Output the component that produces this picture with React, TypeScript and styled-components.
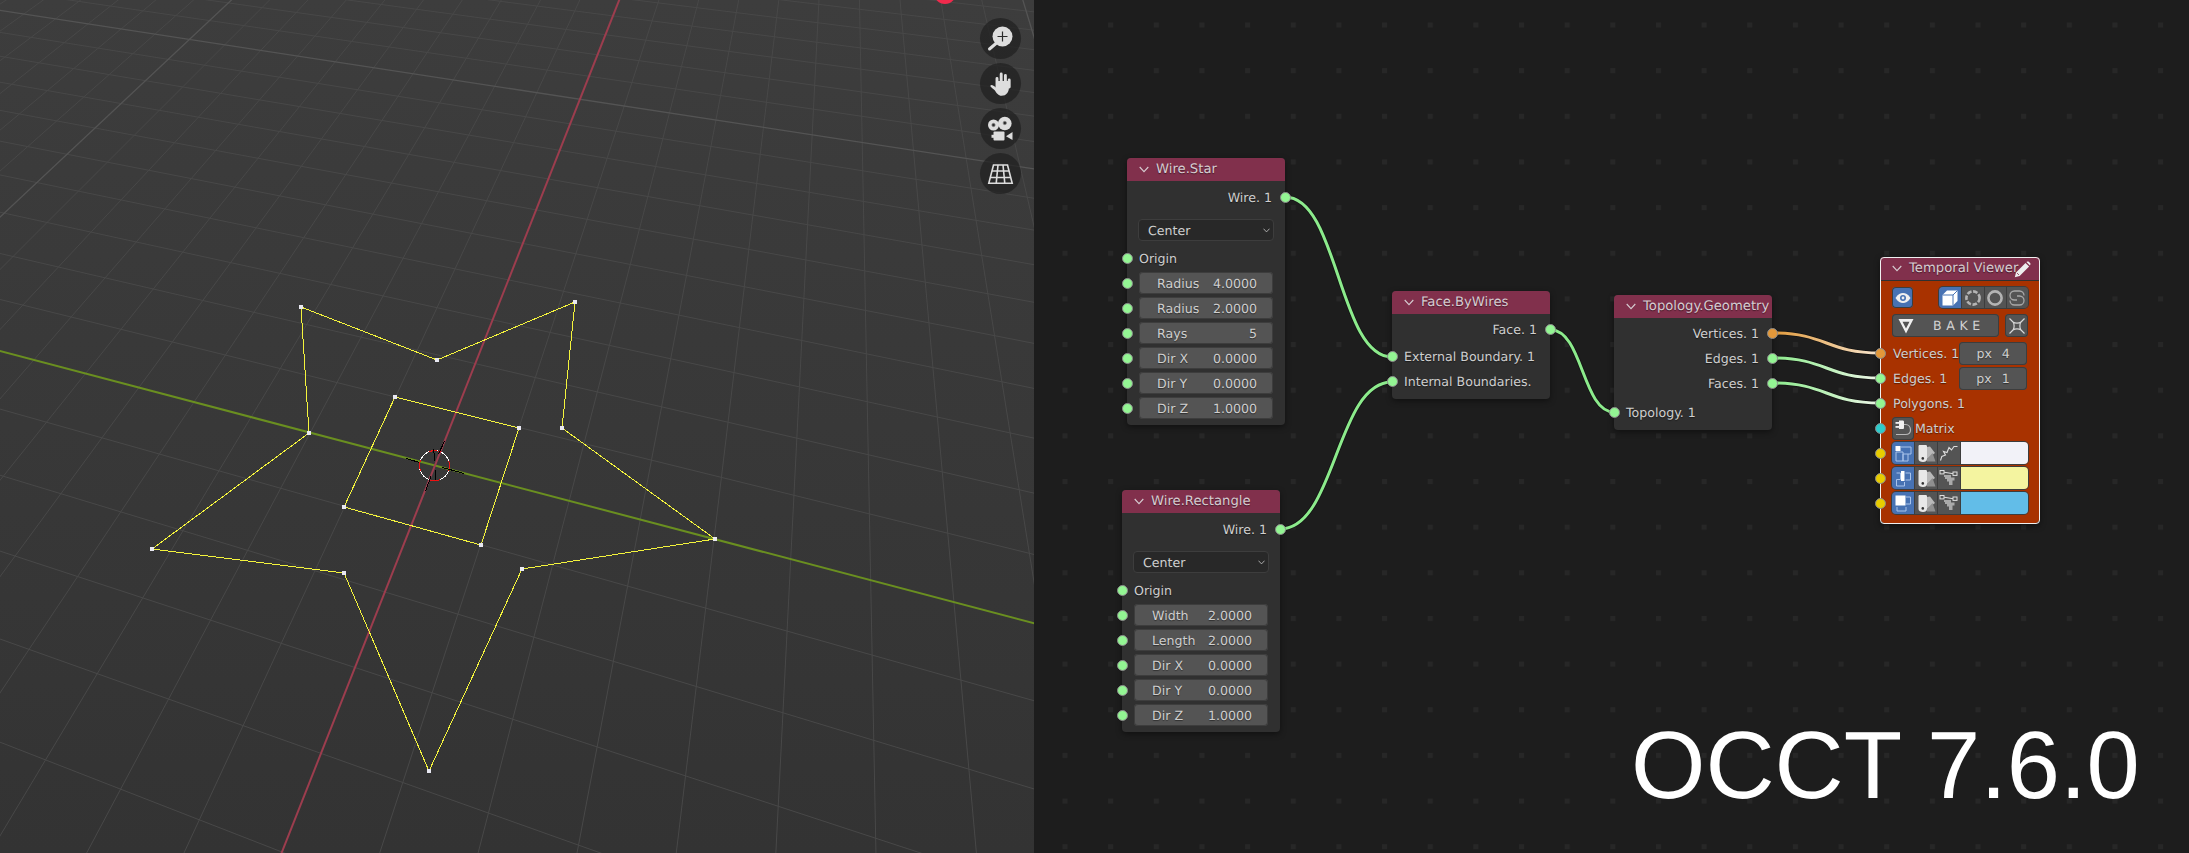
import React, {useMemo} from "react";
import styled, {createGlobalStyle} from "styled-components";

const GlobalStyle = createGlobalStyle`
    html, body {
        margin: 0;
        width: 2189px;
        height: 853px;
        overflow: hidden;
        background: #1d1d1d;
    }
`

const Page = styled.div`
    display: flex;
    width: 2189px;
    height: 853px;
    font-family: "DejaVu Sans", "Liberation Sans", sans-serif;
    font-size: 12.6px;
    color: #cfcfcf;
    text-rendering: geometricPrecision;
`

const Viewport = styled.div`
    position: relative;
    flex: none;
    width: 1034px;
    overflow: hidden;
    background: linear-gradient(#3d3d3d, #333333);
`

const Drawing = styled.svg`
    position: absolute;
    inset: 0;
    width: 100%;
    height: 100%;
`

const GizmoColumn = styled.div`
    position: absolute;
    top: 17.5px;
    right: 13.5px;
    display: flex;
    flex-direction: column;
    gap: 4px;
`

const GizmoButton = styled.div`
    width: 41px;
    height: 41px;
    border-radius: 50%;
    background: rgba(32, 32, 32, 0.72);

    svg {
        display: block;
    }
`

const Editor = styled.div`
    position: relative;
    flex: 1;
    overflow: hidden;
    background: #1d1d1d;
`

const Caption = styled.div`
    position: absolute;
    left: 597px;
    top: 711px;
    font-family: "Liberation Sans", Arial, sans-serif;
    font-size: 95.7px;
    color: #ffffff;
    white-space: nowrap;
`

const NodeBox = styled.div<{$x: number; $y: number; $selected?: boolean}>`
    position: absolute;
    left: ${p => p.$x}px;
    top: ${p => p.$y}px;
    width: ${p => (p.$selected ? 160 : 158)}px;
    box-sizing: border-box;
    border-radius: 4px;
    background: #303030;
    box-shadow: 0 2px 6px rgba(0, 0, 0, 0.45);
    outline: ${p => (p.$selected ? "1px solid #f0f0f0" : "none")};
    outline-offset: -1px;
`

const NodeHeader = styled.div`
    display: flex;
    align-items: center;
    gap: 7px;
    height: 23px;
    padding-left: 12px;
    border-radius: 4px 4px 0 0;
    background: #81304c;
    color: #d6ccd1;
    font-size: 13.2px;
    text-shadow: 0 1px 1px rgba(0, 0, 0, 0.45);
    white-space: nowrap;

    svg {
        flex: none;
    }
`

const NodeBody = styled.div`
    padding: 3.5px 0 4.5px;
`

const Row = styled.div<{$output?: boolean; $gap?: number}>`
    position: relative;
    display: flex;
    align-items: center;
    justify-content: ${p => (p.$output ? "flex-end" : "flex-start")};
    box-sizing: border-box;
    height: 25px;
    margin-top: ${p => p.$gap ?? 0}px;
    padding: 0 ${p => (p.$output ? 13 : 12)}px 0 12px;
    text-shadow: 0 1px 1px rgba(0, 0, 0, 0.45);
    white-space: nowrap;
`

const Socket = styled.span<{$side: "left" | "right"; $color?: string}>`
    position: absolute;
    ${p => p.$side}: -5.5px;
    top: 7px;
    box-sizing: border-box;
    width: 11px;
    height: 11px;
    border-radius: 50%;
    border: 1.5px solid #8a8a8a;
    background: ${p => p.$color ?? "#93f593"};
`

const ViewerBody = styled.div`
    border-radius: 0 0 4px 4px;
    background: #a83200;
    padding: 6px 0 7.5px;
    margin: 1px;

    ${Socket} {
        left: -6.5px;
    }
`

const Field = styled.div`
    flex: 1;
    display: flex;
    align-items: center;
    justify-content: space-between;
    box-sizing: border-box;
    height: 22px;
    padding: 0 16px 0 18px;
    border-radius: 4px;
    background: #545454;
    box-shadow: 0 0 0 1px #3d3d3d inset;
`

const Dropdown = styled.div`
    display: flex;
    align-items: center;
    justify-content: space-between;
    box-sizing: border-box;
    height: 22px;
    margin: 9.5px 11px 4.5px 11px;
    padding: 0 3.5px 0 9px;
    border-radius: 4px;
    background: #282828;
    border: 1px solid #3d3d3d;
`

const ToolRow = styled.div`
    display: flex;
    align-items: stretch;
    justify-content: space-between;
    height: 21px;
    margin: 0 11px 6px;
`

const BakeRow = styled.div`
    display: flex;
    gap: 6px;
    height: 23px;
    margin: 0 11px 3.5px;
`

const ToolButton = styled.div<{$active?: boolean; $width?: number}>`
    display: flex;
    align-items: center;
    justify-content: center;
    flex: none;
    box-sizing: border-box;
    width: ${p => p.$width ?? 22}px;
    border-radius: 4px;
    background: ${p => (p.$active ? "#4772b3" : "#545454")};
    box-shadow: 0 0 0 1px #3d3d3d inset;
`

const ButtonGroup = styled.div`
    display: flex;
    border-radius: 4px;
    overflow: hidden;
    box-shadow: 0 0 0 1px #3d3d3d;
`

const GroupCell = styled.div<{$active?: boolean; $width?: number}>`
    display: flex;
    align-items: center;
    justify-content: center;
    flex: none;
    box-sizing: border-box;
    width: ${p => p.$width ?? 22.25}px;
    background: ${p => (p.$active ? "#4772b3" : "#545454")};

    & + & {
        border-left: 1px solid #3d3d3d;
    }
`

const BakeButton = styled.div`
    flex: 1;
    display: flex;
    align-items: center;
    box-sizing: border-box;
    padding-left: 6px;
    border-radius: 4px;
    background: #545454;
    box-shadow: 0 0 0 1px #3d3d3d inset;
    color: #d2d2d2;
    letter-spacing: 4.6px;
`

const BakeLabel = styled.span`
    margin-left: 19px;
`

const PixelField = styled.div`
    display: flex;
    align-items: center;
    justify-content: center;
    gap: 10px;
    box-sizing: border-box;
    width: 68px;
    height: 23px;
    margin-left: auto;
    border-radius: 4px;
    background: #545454;
    box-shadow: 0 0 0 1px #3d3d3d inset;
`

const PlugButton = styled(ToolButton)`
    height: 23px;
    margin-left: -1px;
    margin-right: 1px;
`

const ColorStrip = styled.div`
    flex: 1;
    display: flex;
    height: 22px;
    margin: 0 -1px;
    border-radius: 4px;
    overflow: hidden;
    box-shadow: 0 0 0 1px #3d3d3d;
`

const Swatch = styled.div<{$color: string}>`
    flex: 1;
    background: ${p => p.$color};
    border-left: 1px solid #3d3d3d;
`

const PencilSpot = styled.span`
    position: absolute;
    left: 134px;
    top: 4px;
    line-height: 0;
`

/* ground plane -> screen, fitted on the axes and the rectangle corners */
const project = (u: number, v: number) => {
    const w = 1 - 0.0183 * u - 0.05404 * v
    return [(435 + 56.68 * u - 45.84 * v) / w, (465.5 + 8.5 * u + 31.26 * v) / w]
}

const segment = (a: number[], b: number[]) => `M${a[0].toFixed(1)} ${a[1].toFixed(1)}L${b[0].toFixed(1)} ${b[1].toFixed(1)}`

const starPoints = [[301, 307], [437, 360], [575, 302], [562, 428], [715, 539], [522, 569], [429, 771], [344, 573], [152, 549], [309, 433]]
const rectPoints = [[395, 397], [519, 428], [481, 545], [344, 507]]

const GroundGrid = () => {
    const {minor, major} = useMemo(() => {
        const minorLines: string[] = []
        const majorLines: string[] = []
        for (let i = -40; i <= 14; i++) {
            if (i === 0) continue
            const target = i % 10 === 0 ? majorLines : minorLines
            target.push(segment(project(i, -40), project(i, 12)))
        }
        for (let i = -40; i <= 12; i++) {
            if (i === 0) continue
            const target = i % 10 === 0 ? majorLines : minorLines
            target.push(segment(project(-40, i), project(14, i)))
        }
        return {minor: minorLines.join(""), major: majorLines.join("")}
    }, [])

    return (
        <g fill="none">
            <path d={minor} stroke="#484848" strokeWidth="1"/>
            <path d={major} stroke="#545454" strokeWidth="1.3"/>
            <path d={segment(project(-40, 0), project(14, 0))} stroke="#6a8f20" strokeWidth="2"/>
            <path d={segment(project(0, -40), project(0, 12))} stroke="#9c3d4e" strokeWidth="2"/>
        </g>
    )
}

const WireShape = ({points}: {points: number[][]}) => (
    <g>
        <polygon
            points={points.map(p => p.join(",")).join(" ")}
            fill="none"
            stroke="#f4f43c"
            strokeWidth="1"
            shapeRendering="crispEdges"
        />
        {points.map(([x, y]) => (
            <rect key={`${x}-${y}`} x={x - 2} y={y - 2} width="4" height="4" fill="#e8e8f2"/>
        ))}
    </g>
)

const Cursor3D = () => (
    <g fill="none" shapeRendering="crispEdges">
        <circle cx="434.5" cy="465.7" r="15" stroke="#ffffff" strokeWidth="1"/>
        <circle cx="434.5" cy="465.7" r="15" stroke="#ee1111" strokeWidth="1" strokeDasharray="11.8 11.8" strokeDashoffset="6"/>
        <path
            d="M406 458.5L419.5 462.5M442.5 467.5L464 473.5M444.5 441L438.5 454M431 476.5L425.5 491M433.5 449.5L435 461M435.5 470L435.5 479.5"
            stroke="#000000"
            strokeWidth="1"
        />
    </g>
)

const ViewportScene = () => (
    <Drawing viewBox="0 0 1034 853">
        <GroundGrid/>
        <circle cx="945" cy="-7" r="11" fill="#f02a4c"/>
        <WireShape points={starPoints}/>
        <WireShape points={rectPoints}/>
        <Cursor3D/>
    </Drawing>
)

const ZoomIcon = () => (
    <svg width="41" height="41" viewBox="0 0 41 41">
        <circle cx="22.5" cy="18.5" r="10" fill="#dddddd"/>
        <path d="M17.5 18.5H27.5M22.5 13.5V23.5" stroke="#2a2a2a" strokeWidth="1.2"/>
        <path d="M9.5 31L16.5 25" stroke="#dddddd" strokeWidth="3" strokeLinecap="round"/>
    </svg>
)

const HandIcon = () => (
    <svg width="41" height="41" viewBox="0 0 41 41">
        <path d="M14.5 27C11 24 10 23.5 10.5 22.5C11.5 21 13.5 22.5 16 24.5V18H29V24C29 29 26.5 32.8 21.5 32.8C18.5 32.8 16.5 30 14.5 27Z" fill="#dddddd"/>
        <path d="M17 24V15.5M21.2 24V11M25.4 24V12.5M29.2 24V17" stroke="#dddddd" strokeWidth="2.9" strokeLinecap="round"/>
    </svg>
)

const CameraIcon = () => (
    <svg width="41" height="41" viewBox="0 0 41 41">
        <circle cx="13.5" cy="17" r="5.5" fill="#dddddd"/>
        <circle cx="24.8" cy="15.5" r="6.8" fill="#dddddd"/>
        <circle cx="13.5" cy="17" r="1.7" fill="#2a2a2a" stroke="#8a8a8a" strokeWidth="0.7"/>
        <circle cx="24.8" cy="15" r="1.7" fill="#2a2a2a" stroke="#8a8a8a" strokeWidth="0.7"/>
        <rect x="13.5" y="23.5" width="11" height="9" rx="1" fill="#dddddd"/>
        <rect x="11.5" y="26.8" width="2.5" height="3" fill="#dddddd"/>
        <path d="M26 28.2L32.5 24V32Z" fill="#dddddd"/>
    </svg>
)

const GridIcon = () => (
    <svg width="41" height="41" viewBox="0 0 41 41">
        <path
            d="M13.5 12H27.5L32.2 30.3H8.8ZM11.8 18H29.2M10 24.5H31M18 12L16.2 30.3M23 12L24.8 30.3"
            fill="none"
            stroke="#dddddd"
            strokeWidth="1.6"
        />
    </svg>
)

const Chevron = ({size = 10, color = "#d6ccd1"}: {size?: number; color?: string}) => (
    <svg width={size} height={size * 0.7} viewBox="0 0 10 7">
        <path d="M0.7 1L5 5.6L9.3 1" fill="none" stroke={color} strokeWidth="1.1"/>
    </svg>
)

const PencilIcon = () => (
    <svg width="17" height="17" viewBox="0 0 17 17">
        <path d="M0.8 16.2L2 11.4L11.5 1.9L15.1 5.5L5.6 15Z" fill="#eeeeee"/>
        <path d="M12.4 1L13.4 0.6C14 0.3 14.6 0.5 15 0.9L16.1 2C16.6 2.5 16.7 3.1 16.3 3.7L15.9 4.6Z" fill="#eeeeee"/>
        <path d="M3 12L5 14" stroke="#81304c" strokeWidth="0.8"/>
    </svg>
)

const EyeIcon = () => (
    <svg width="16" height="12" viewBox="0 0 16 12">
        <path d="M0.5 6C3 2 5.5 1 8 1C10.5 1 13 2 15.5 6C13 10 10.5 11 8 11C5.5 11 3 10 0.5 6Z" fill="#f0f0f0"/>
        <circle cx="8" cy="6" r="3" fill="#4772b3"/>
        <circle cx="8" cy="6" r="1.4" fill="#f0f0f0"/>
    </svg>
)

const CubeIcon = () => (
    <svg width="18" height="18" viewBox="0 0 18 18">
        <path d="M1.5 6L6 1.5H16.5V12L12 16.5H1.5Z" fill="#ffffff"/>
        <path d="M1.5 6H12V16.5M12 6L16.5 1.5" fill="none" stroke="#4772b3" strokeWidth="1"/>
    </svg>
)

const VertexRingIcon = () => (
    <svg width="18" height="18" viewBox="0 0 18 18">
        <circle cx="9" cy="9" r="6.6" fill="none" stroke="#b4b4b4" strokeWidth="2.6" strokeDasharray="4.6 1.6"/>
    </svg>
)

const EdgeRingIcon = () => (
    <svg width="18" height="18" viewBox="0 0 18 18">
        <circle cx="9" cy="9" r="6.6" fill="none" stroke="#b4b4b4" strokeWidth="2.6"/>
    </svg>
)

const CurveRingIcon = () => (
    <svg width="18" height="18" viewBox="0 0 18 18">
        <path
            d="M9 11H6.5A4.5 4.5 0 0 1 6.5 2H11.5A4.5 4.5 0 0 1 16 6.5M9 7H11.5A4.5 4.5 0 0 1 11.5 16H6.5A4.5 4.5 0 0 1 2 11.5"
            fill="none"
            stroke="#a8a8a8"
            strokeWidth="1.3"
        />
    </svg>
)

const TriangleIcon = () => (
    <svg width="16" height="16" viewBox="0 0 16 16">
        <path d="M0.5 1H15.5L8 15.5ZM4.5 3.8L8 10.5L11.5 3.8Z" fill="#f0f0f0" fillRule="evenodd"/>
    </svg>
)

const CrossRingIcon = () => (
    <svg width="18" height="18" viewBox="0 0 18 18">
        <path d="M5 5C7 6.5 11 6.5 13 5C11.5 7 11.5 11 13 13C11 11.5 7 11.5 5 13C6.5 11 6.5 7 5 5Z" fill="none" stroke="#d8d8d8" strokeWidth="1.2"/>
        <path d="M5 5L1.5 1.5M13 5L16.5 1.5M5 13L1.5 16.5M13 13L16.5 16.5" stroke="#d8d8d8" strokeWidth="1.2"/>
    </svg>
)

const PlugIcon = () => (
    <svg width="20" height="20" viewBox="0 0 20 20">
        <rect x="2.5" y="4" width="4" height="1.8" fill="#f0f0f0"/>
        <rect x="2.5" y="8" width="4" height="1.8" fill="#f0f0f0"/>
        <path d="M6 2.5H9.5C10.5 2.5 11 3 11 4V9.5C11 10.5 10.5 11 9.5 11H6Z" fill="#f0f0f0"/>
        <path d="M11 6.5H12.5C15.5 6.5 17.5 9 17.5 12C17.5 15 15.5 16.5 12.5 16.5H3" fill="none" stroke="#b8b8b8" strokeWidth="1.2"/>
    </svg>
)

const LayoutIcon = ({variant}: {variant: number}) => (
    <svg width="17" height="17" viewBox="0 0 17 17">
        <path
            d={variant === 1
                ? "M1 7H8V16H1ZM6 2H16V9H8M8 9V16H13V9"
                : variant === 2
                    ? "M1.5 3H5.5V9.5H1.5V16H9.5V12M10.5 3H15.5V10H10.5"
                    : "M11 2H15.5V9H11M2 12V16H11V12"}
            fill="none"
            stroke="#a9c3ea"
            strokeWidth="1"
        />
        {variant === 1 && <rect x="0.5" y="1" width="5" height="5" fill="#ffffff"/>}
        {variant === 2 && <rect x="6" y="1" width="3.5" height="10" fill="#ffffff"/>}
        {variant === 3 && <rect x="0.5" y="0.5" width="10" height="10" fill="#ffffff"/>}
    </svg>
)

const FanIcon = () => (
    <svg width="19" height="19" viewBox="0 0 19 19">
        <path d="M10 3L13 2.5L18 9L10 15Z" fill="#b8b8b8"/>
        <path d="M10 15L15.5 9L18.5 17.5H10Z" fill="#8f8f8f"/>
        <path d="M2.5 1H8.5C9.6 1 10 1.5 10 2.5V15C10 17 8.5 18 6 18C3.5 18 1.5 17 1.5 15V2.5C1.5 1.5 1.8 1 2.5 1Z" fill="#e8e8e8"/>
        <circle cx="5.8" cy="14.4" r="1.3" fill="#333333"/>
    </svg>
)

const WiggleIcon = () => (
    <svg width="20" height="18" viewBox="0 0 20 18">
        <path
            d="M1.5 16.5L2.8 12.5L6.5 11L4.5 7.5L8 8.5L10 3.5L12.5 6L15 2.5L18.5 2.5"
            fill="none"
            stroke="#dedede"
            strokeWidth="1.1"
        />
    </svg>
)

const ChainIcon = () => (
    <svg width="20" height="18" viewBox="0 0 20 18">
        <rect x="1" y="1.5" width="4" height="3.4" fill="none" stroke="#e0e0e0" strokeWidth="1"/>
        <rect x="14" y="3" width="4" height="3.4" fill="none" stroke="#e0e0e0" strokeWidth="1"/>
        <path d="M5 3.2L14 4.7" stroke="#e0e0e0" strokeWidth="1"/>
        <path d="M5 6H12V8.5H15.5V11.5H13.5V16H10V12.5H8V10H6V8H5Z" fill="#aaaaaa"/>
    </svg>
)

const FieldRow = ({label, value}: {label: string; value: string}) => (
    <Row>
        <Socket $side="left"/>
        <Field>
            <span>{label}</span>
            <span>{value}</span>
        </Field>
    </Row>
)

const CenterDropdown = () => (
    <Dropdown>
        <span>Center</span>
        <Chevron size={7} color="#d0d0d0"/>
    </Dropdown>
)

const Header = ({title}: {title: string}) => (
    <NodeHeader>
        <Chevron/>
        <span>{title}</span>
    </NodeHeader>
)

const WIRE_GREEN = "#8ceb8c"

const wirePath = (x1: number, y1: number, x2: number, y2: number) => {
    const handle = (x2 - x1) * 0.5
    return `M${x1} ${y1}C${x1 + handle} ${y1} ${x2 - handle} ${y2} ${x2} ${y2}`
}

const wires = [
    {d: wirePath(1285, 197, 1392, 357), stroke: WIRE_GREEN},
    {d: wirePath(1280, 529, 1392, 382), stroke: WIRE_GREEN},
    {d: wirePath(1551, 330, 1614, 412), stroke: WIRE_GREEN},
    {d: wirePath(1773, 333, 1880, 353), stroke: "url(#wire-vertices)"},
    {d: wirePath(1773, 358, 1880, 378), stroke: "url(#wire-edges)"},
    {d: wirePath(1773, 383, 1880, 403), stroke: "url(#wire-faces)"},
]

const Wires = () => (
    <Drawing>
        <defs>
            <pattern id="editor-dots" x="28.5" y="22.5" width="45.65" height="45.65" patternUnits="userSpaceOnUse">
                <rect width="5" height="5" fill="#272727"/>
            </pattern>
            <linearGradient id="wire-vertices" gradientUnits="userSpaceOnUse" x1="1773" y1="0" x2="1880" y2="0">
                <stop offset="0" stopColor="#e09a3c"/>
                <stop offset="1" stopColor="#f8e6d0"/>
            </linearGradient>
            <linearGradient id="wire-edges" gradientUnits="userSpaceOnUse" x1="1773" y1="0" x2="1880" y2="0">
                <stop offset="0" stopColor={WIRE_GREEN}/>
                <stop offset="1" stopColor="#eef6e8"/>
            </linearGradient>
            <linearGradient id="wire-faces" gradientUnits="userSpaceOnUse" x1="1773" y1="0" x2="1880" y2="0">
                <stop offset="0" stopColor={WIRE_GREEN}/>
                <stop offset="1" stopColor="#eef6e8"/>
            </linearGradient>
        </defs>
        <rect width="100%" height="100%" fill="url(#editor-dots)"/>
        <g transform="translate(-1034 0)" fill="none">
            {wires.map(wire => (
                <g key={wire.d}>
                    <path d={wire.d} stroke="rgba(0,0,0,0.35)" strokeWidth="4.5"/>
                    <path d={wire.d} stroke={wire.stroke} strokeWidth="3"/>
                </g>
            ))}
        </g>
    </Drawing>
)

const WireStarNode = () => (
    <NodeBox $x={93} $y={158}>
        <Header title="Wire.Star"/>
        <NodeBody>
            <Row $output>Wire. 1<Socket $side="right"/></Row>
            <CenterDropdown/>
            <Row><Socket $side="left"/>Origin</Row>
            <FieldRow label="Radius" value="4.0000"/>
            <FieldRow label="Radius" value="2.0000"/>
            <FieldRow label="Rays" value="5"/>
            <FieldRow label="Dir X" value="0.0000"/>
            <FieldRow label="Dir Y" value="0.0000"/>
            <FieldRow label="Dir Z" value="1.0000"/>
        </NodeBody>
    </NodeBox>
)

const WireRectangleNode = () => (
    <NodeBox $x={88} $y={490}>
        <Header title="Wire.Rectangle"/>
        <NodeBody>
            <Row $output>Wire. 1<Socket $side="right"/></Row>
            <CenterDropdown/>
            <Row><Socket $side="left"/>Origin</Row>
            <FieldRow label="Width" value="2.0000"/>
            <FieldRow label="Length" value="2.0000"/>
            <FieldRow label="Dir X" value="0.0000"/>
            <FieldRow label="Dir Y" value="0.0000"/>
            <FieldRow label="Dir Z" value="1.0000"/>
        </NodeBody>
    </NodeBox>
)

const FaceByWiresNode = () => (
    <NodeBox $x={358} $y={290.5}>
        <Header title="Face.ByWires"/>
        <NodeBody>
            <Row $output>Face. 1<Socket $side="right"/></Row>
            <Row $gap={2}><Socket $side="left"/>External Boundary. 1</Row>
            <Row><Socket $side="left"/>Internal Boundaries.</Row>
        </NodeBody>
    </NodeBox>
)

const TopologyGeometryNode = () => (
    <NodeBox $x={580} $y={294.5}>
        <Header title="Topology.Geometry"/>
        <NodeBody>
            <Row $output>Vertices. 1<Socket $side="right" $color="#e3983a"/></Row>
            <Row $output>Edges. 1<Socket $side="right"/></Row>
            <Row $output>Faces. 1<Socket $side="right"/></Row>
            <Row $gap={4}><Socket $side="left"/>Topology. 1</Row>
        </NodeBody>
    </NodeBox>
)

const colorRows = [
    {variant: 1, color: "#f2f2f8", Icon: WiggleIcon},
    {variant: 2, color: "#f4f4a0", Icon: ChainIcon},
    {variant: 3, color: "#62bde8", Icon: ChainIcon},
]

const TemporalViewerNode = () => (
    <NodeBox $x={846} $y={257} $selected>
        <NodeHeader>
            <Chevron/>
            <span>Temporal Viewer</span>
            <PencilSpot><PencilIcon/></PencilSpot>
        </NodeHeader>
        <ViewerBody>
            <ToolRow>
                <ToolButton $active $width={21}><EyeIcon/></ToolButton>
                <ButtonGroup>
                    <GroupCell $active><CubeIcon/></GroupCell>
                    <GroupCell><VertexRingIcon/></GroupCell>
                    <GroupCell><EdgeRingIcon/></GroupCell>
                    <GroupCell><CurveRingIcon/></GroupCell>
                </ButtonGroup>
            </ToolRow>
            <BakeRow>
                <BakeButton>
                    <TriangleIcon/>
                    <BakeLabel>BAKE</BakeLabel>
                </BakeButton>
                <ToolButton $width={23}><CrossRingIcon/></ToolButton>
            </BakeRow>
            <Row>
                <Socket $side="left" $color="#e3983a"/>
                Vertices. 1
                <PixelField><span>px</span><span>4</span></PixelField>
            </Row>
            <Row>
                <Socket $side="left"/>
                Edges. 1
                <PixelField><span>px</span><span>1</span></PixelField>
            </Row>
            <Row><Socket $side="left"/>Polygons. 1</Row>
            <Row>
                <Socket $side="left" $color="#2ecccc"/>
                <PlugButton $width={22}><PlugIcon/></PlugButton>
                Matrix
            </Row>
            {colorRows.map(({variant, color, Icon}) => (
                <Row key={variant}>
                    <Socket $side="left" $color="#e8cc00"/>
                    <ColorStrip>
                        <GroupCell $active $width={22}><LayoutIcon variant={variant}/></GroupCell>
                        <GroupCell $width={23}><FanIcon/></GroupCell>
                        <GroupCell $width={23}><Icon/></GroupCell>
                        <Swatch $color={color}/>
                    </ColorStrip>
                </Row>
            ))}
        </ViewerBody>
    </NodeBox>
)

export default function App() {
    return (
        <Page>
            <GlobalStyle/>
            <Viewport>
                <ViewportScene/>
                <GizmoColumn>
                    <GizmoButton><ZoomIcon/></GizmoButton>
                    <GizmoButton><HandIcon/></GizmoButton>
                    <GizmoButton><CameraIcon/></GizmoButton>
                    <GizmoButton><GridIcon/></GizmoButton>
                </GizmoColumn>
            </Viewport>
            <Editor>
                <Wires/>
                <WireStarNode/>
                <WireRectangleNode/>
                <FaceByWiresNode/>
                <TopologyGeometryNode/>
                <TemporalViewerNode/>
                <Caption>OCCT 7.6.0</Caption>
            </Editor>
        </Page>
    )
}
